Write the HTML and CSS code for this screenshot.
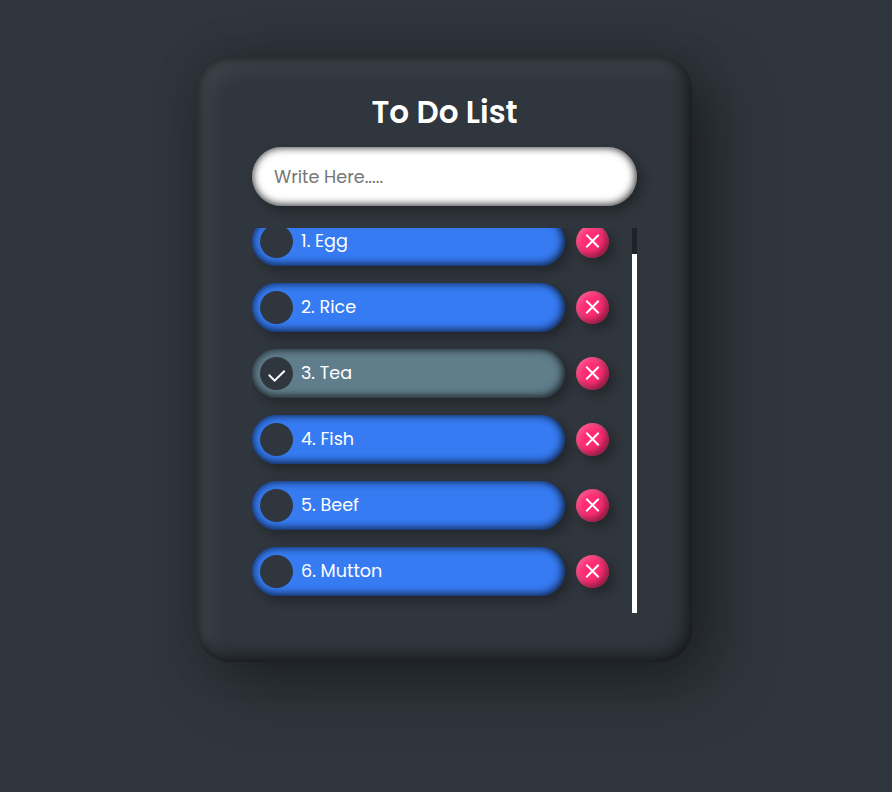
FILE: index.html
```html
<!DOCTYPE html>
<html lang="en">
<head>
<meta charset="utf-8">
<title>To Do List</title>
<link rel="stylesheet" href="styles.css">
</head>
<body>
<main class="card">
  <h1>To Do List</h1>
  <input class="entry" type="text" placeholder="Write Here.....">
  <div class="scroller">
    <ul class="list">
      <li><div class="task"><span class="check"></span><span class="label">1. Egg</span></div><button class="remove" aria-label="Remove"><svg viewBox="0 0 33 33"><path d="M10.3 9.8 22.7 22.2M22.7 9.8 10.3 22.2"/></svg></button></li>
      <li><div class="task"><span class="check"></span><span class="label">2. Rice</span></div><button class="remove" aria-label="Remove"><svg viewBox="0 0 33 33"><path d="M10.3 9.8 22.7 22.2M22.7 9.8 10.3 22.2"/></svg></button></li>
      <li><div class="task done"><span class="check"><svg viewBox="0 0 33 33"><path d="M8.8 17.8 14.6 23.7 24.7 13.7"/></svg></span><span class="label">3. Tea</span></div><button class="remove" aria-label="Remove"><svg viewBox="0 0 33 33"><path d="M10.3 9.8 22.7 22.2M22.7 9.8 10.3 22.2"/></svg></button></li>
      <li><div class="task"><span class="check"></span><span class="label">4. Fish</span></div><button class="remove" aria-label="Remove"><svg viewBox="0 0 33 33"><path d="M10.3 9.8 22.7 22.2M22.7 9.8 10.3 22.2"/></svg></button></li>
      <li><div class="task"><span class="check"></span><span class="label">5. Beef</span></div><button class="remove" aria-label="Remove"><svg viewBox="0 0 33 33"><path d="M10.3 9.8 22.7 22.2M22.7 9.8 10.3 22.2"/></svg></button></li>
      <li><div class="task"><span class="check"></span><span class="label">6. Mutton</span></div><button class="remove" aria-label="Remove"><svg viewBox="0 0 33 33"><path d="M10.3 9.8 22.7 22.2M22.7 9.8 10.3 22.2"/></svg></button></li>
    </ul>
    <div class="track"><div class="thumb"></div></div>
  </div>
</main>
</body>
</html>
```
FILE: styles.css
```css
* { margin: 0; padding: 0; box-sizing: border-box; }
body {
  height: 792px;
  overflow: hidden;
  background: #30363d;
  font-family: Poppins, Inter, sans-serif;
  color: #fff;
}
.card {
  width: 495px;
  height: 605px;
  margin: 57px 0 0 197px;
  padding: 30px 55px 49px;
  border-radius: 33px;
  background: #30363d;
  box-shadow:
    22px 22px 66px rgba(0, 0, 0, .36),
    0 0 44px rgba(0, 0, 0, .16),
    inset 0 0 11px rgba(0, 0, 0, .45),
    inset -6px -6px 18px rgba(0, 0, 0, .38),
    inset 11px 11px 22px rgba(255, 255, 255, .08);
}
h1 {
  height: 50px;
  margin-bottom: 10px;
  line-height: 51px;
  text-align: center;
  font-size: 31px;
  font-weight: 600;
}
.entry {
  display: block;
  width: 385px;
  height: 59px;
  margin-bottom: 22px;
  padding: 1px 22px 0;
  border: 0;
  border-radius: 30px;
  background: #fff;
  font: 400 17.6px Poppins, Inter, sans-serif;
  box-shadow: 5px 5px 11px rgba(0, 0, 0, .3), inset 0 0 8px rgba(0, 0, 0, .6), inset -1px -1px 9px rgba(0, 0, 0, .5);
}
.entry::placeholder { color: #757575; opacity: 1; }
.scroller {
  display: flex;
  height: 385px;
  overflow: hidden;
}
.list {
  flex: 1;
  list-style: none;
  margin-top: -11px;
}
.list li {
  display: flex;
  align-items: center;
  gap: 11px;
  height: 49px;
  margin-bottom: 17px;
}
.task {
  display: flex;
  align-items: center;
  gap: 8px;
  width: 313px;
  height: 49px;
  padding-left: 8px;
  border-radius: 25px;
  background: #367bf2;
  box-shadow: 5px 5px 11px rgba(0, 0, 0, .3), inset 0 0 8px rgba(0, 0, 0, .65), inset -2px -2px 8px rgba(0, 0, 0, .42);
}
.done { background: #607d8b; }
.check {
  width: 33px;
  height: 33px;
  border-radius: 50%;
  background: #30363d;
}
.label { padding-bottom: 2px; font-size: 17.6px; line-height: 26px; }
svg {
  display: block;
  width: 33px;
  height: 33px;
  fill: none;
  stroke: #fff;
  stroke-width: 2;
}
.remove {
  width: 33px;
  height: 33px;
  border: 0;
  border-radius: 50%;
  background: #ff2c74;
  box-shadow:
    5px 5px 11px rgba(0, 0, 0, .3),
    inset -3px -3px 7px rgba(0, 0, 0, .48),
    inset 2px 2px 6px rgba(255, 255, 255, .28);
}
.track {
  width: 5px;
  padding-top: 26px;
  background: #1e2327;
}
.thumb { height: 359px; background: #fff; }
```
